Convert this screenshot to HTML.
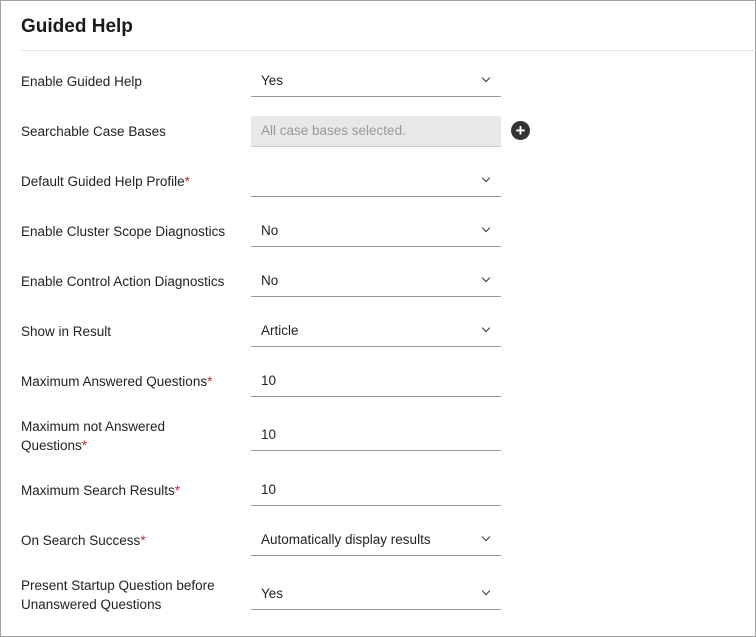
<!DOCTYPE html>
<html><head><style>
body{margin:0;width:756px;height:637px;overflow:hidden;background:#fff;font-family:"Liberation Sans",sans-serif;color:#222;}
.frame{position:absolute;left:0;top:0;width:754px;height:635px;border:1px solid #a0a0a0;}
.t{position:absolute;left:21px;top:16px;font-size:19px;font-weight:bold;color:#1a1a1a;}
.hl{position:absolute;left:21px;top:50px;width:735px;height:1px;background:#e6e6e6;}
.l{position:absolute;left:21px;font-size:13.5px;line-height:19px;color:#222;}
.r{color:#c0282d;}
.f{position:absolute;left:251px;width:250px;height:30px;border-bottom:1px solid #999;font-size:13.5px;}
.f span{position:absolute;left:10px;top:7px;}
.f i{position:absolute;right:12px;top:9px;width:5px;height:5px;border-right:1.5px solid #333;border-bottom:1.5px solid #333;transform:rotate(45deg);}
.g{background:#e8e8e8;color:#999;border-bottom:1px solid #ccc;}
.plus{position:absolute;left:511px;top:121px;width:19px;height:19px;border-radius:50%;background:#333;color:#fff;font-size:17px;font-weight:bold;line-height:19px;text-align:center;}
</style></head><body>
<div class="frame"></div>
<div class="t">Guided Help</div>
<div class="hl"></div>

<div class="l" style="top:72px">Enable Guided Help</div>
<div class="f" style="top:66px"><span>Yes</span><i></i></div>

<div class="l" style="top:122px">Searchable Case Bases</div>
<div class="f g" style="top:116px"><span>All case bases selected.</span></div>
<div class="plus">+</div>

<div class="l" style="top:172px">Default Guided Help Profile<span class="r">*</span></div>
<div class="f" style="top:166px"><i></i></div>

<div class="l" style="top:222px">Enable Cluster Scope Diagnostics</div>
<div class="f" style="top:216px"><span>No</span><i></i></div>

<div class="l" style="top:272px">Enable Control Action Diagnostics</div>
<div class="f" style="top:266px"><span>No</span><i></i></div>

<div class="l" style="top:322px">Show in Result</div>
<div class="f" style="top:316px"><span>Article</span><i></i></div>

<div class="l" style="top:372px">Maximum Answered Questions<span class="r">*</span></div>
<div class="f" style="top:366px"><span>10</span></div>

<div class="l" style="top:417px">Maximum not Answered<br>Questions<span class="r">*</span></div>
<div class="f" style="top:420px"><span>10</span></div>

<div class="l" style="top:481px">Maximum Search Results<span class="r">*</span></div>
<div class="f" style="top:475px"><span>10</span></div>

<div class="l" style="top:531px">On Search Success<span class="r">*</span></div>
<div class="f" style="top:525px"><span>Automatically display results</span><i></i></div>

<div class="l" style="top:576px">Present Startup Question before<br>Unanswered Questions</div>
<div class="f" style="top:579px"><span>Yes</span><i></i></div>
</body></html>
